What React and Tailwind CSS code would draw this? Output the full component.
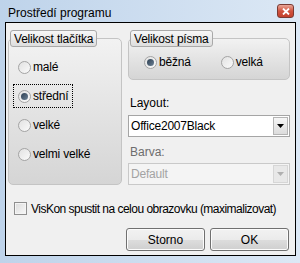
import React from "react";

const font = { fontFamily: '"Liberation Sans", Arial, sans-serif' };

function Radio({ checked, label, focused }) {
  return (
    <div
      className={`flex items-center gap-[2px] h-[22px] px-[4px] ${
        focused ? "outline outline-1 outline-dotted outline-black" : ""
      }`}
    >
      <span className="flex items-center justify-center w-[13px] h-[13px] rounded-full border border-[#a4a4a4] bg-gradient-to-br from-[#e2e2e2] to-[#fafafa]">
        {checked && <span className="w-[7px] h-[7px] rounded-full bg-gradient-to-br from-[#2d3f52] to-[#6d8296]" />}
      </span>
      <span className="text-[12px] text-black leading-none tracking-[-0.2px]">{label}</span>
    </div>
  );
}

function Group({ title, className, frameClass, children }) {
  return (
    <div className={`flex flex-col ${className}`}>
      <div className="relative z-10 ml-[2px] self-start h-[17px] px-[3px] flex items-center rounded-[3px] border border-[#a9a9a9] bg-gradient-to-b from-[#f7f7f7] to-[#dedede] text-[12px] text-black leading-none tracking-[-0.2px]">
        {title}
      </div>
      <div
        className={`-mt-[9px] flex-1 rounded-[5px] border border-[#c4c4c4] bg-gradient-to-b from-[#f2f2f2] to-[#d5d5d5] ${frameClass}`}
      >
        {children}
      </div>
    </div>
  );
}

function Combo({ value, disabled }) {
  return (
    <div
      className={`flex items-center h-[22px] border ${
        disabled ? "border-[#c9c9c9] bg-[#f4f4f4] text-[#a3a3a3]" : "border-[#a5a5a5] bg-white text-black"
      }`}
    >
      <span className="flex-1 pl-[2px] text-[12px] leading-none tracking-[-0.2px]">{value}</span>
      <span
        className={`mr-[1px] w-[15px] h-[18px] flex items-center justify-center border ${
          disabled ? "border-[#d6d6d6] bg-[#e8e8e8]" : "border-[#b4b4b4] bg-gradient-to-b from-[#f6f6f6] to-[#dcdcdc]"
        }`}
      >
        <svg width="7" height="4" viewBox="0 0 7 4">
          <path d="M0 0h7L3.5 4z" fill={disabled ? "#b0b0b0" : "#000"} />
        </svg>
      </span>
    </div>
  );
}

function Button({ children }) {
  return (
    <button className="w-[79px] h-[23px] rounded-[3px] border border-[#707070] bg-[linear-gradient(#f2f2f2_0%,#ebebeb_50%,#dddddd_51%,#cfcfcf_100%)] text-[12px] text-black leading-none shadow-[inset_0_0_0_1px_#fcfcfc]">
      {children}
    </button>
  );
}

export default function App() {
  return (
    <div
      style={font}
      className="w-[300px] h-[263px] flex flex-col bg-gradient-to-r from-[#bed3ea] to-[#dce8f5] overflow-hidden"
    >
      <div className="h-[22px] flex items-start justify-between pl-[8px] pr-[6px]">
        <span className="mt-[4px] text-[12px] text-black">Prostředí programu</span>
        <span className="mt-[4px] w-[17px] h-[14px] flex items-center justify-center rounded-[3px] border border-[#7a3a33] bg-gradient-to-b from-[#e8a699] via-[#d1533f] to-[#c3402c]">
          <svg width="8" height="7" viewBox="0 0 8 7">
            <path d="M1 0.5l6 6M7 0.5l-6 6" stroke="#fff" strokeWidth="1.8" />
          </svg>
        </span>
      </div>
      <div className="ml-[5px] mr-[4px] h-[234px] border border-black bg-[#f0f0f0] flex flex-col px-[2px] pt-[7px]">
        <div className="flex gap-[6px]">
          <Group title="Velikost tlačítka" className="w-[114px] h-[155px]" frameClass="pt-[17px] pl-[5px]">
            <div className="flex flex-col gap-[7px] items-start">
              <Radio label="malé" />
              <Radio label="střední" checked focused />
              <Radio label="velké" />
              <Radio label="velmi velké" />
            </div>
          </Group>
          <div className="w-[162px] flex flex-col">
            <Group title="Velikost písma" className="h-[50px]" frameClass="pt-[12px] pl-[11px] flex gap-[22px]">
              <Radio label="běžná" checked />
              <Radio label="velká" />
            </Group>
            <span className="mt-[17px] pl-[2px] text-[12px] leading-none">Layout:</span>
            <div className="mt-[6px]">
              <Combo value="Office2007Black" />
            </div>
            <span className="mt-[9px] pl-[2px] text-[12px] leading-none text-[#6d6d6d]">Barva:</span>
            <div className="mt-[5px]">
              <Combo value="Default" disabled />
            </div>
          </div>
        </div>
        <div className="mt-[17px] ml-[6px] flex items-center gap-[4px]">
          <span className="shrink-0 w-[13px] h-[13px] border border-[#8f8f8f] bg-gradient-to-br from-[#dcdcdc] to-[#f8f8f8] shadow-[inset_0_0_0_1px_#f4f4f4]" />
          <span className="whitespace-nowrap text-[12px] leading-none tracking-[-0.52px]">
            VisKon spustit na celou obrazovku (maximalizovat)
          </span>
        </div>
        <div className="mt-[13px] flex justify-end gap-[5px] pr-[4px]">
          <Button>Storno</Button>
          <Button>OK</Button>
        </div>
      </div>
    </div>
  );
}
